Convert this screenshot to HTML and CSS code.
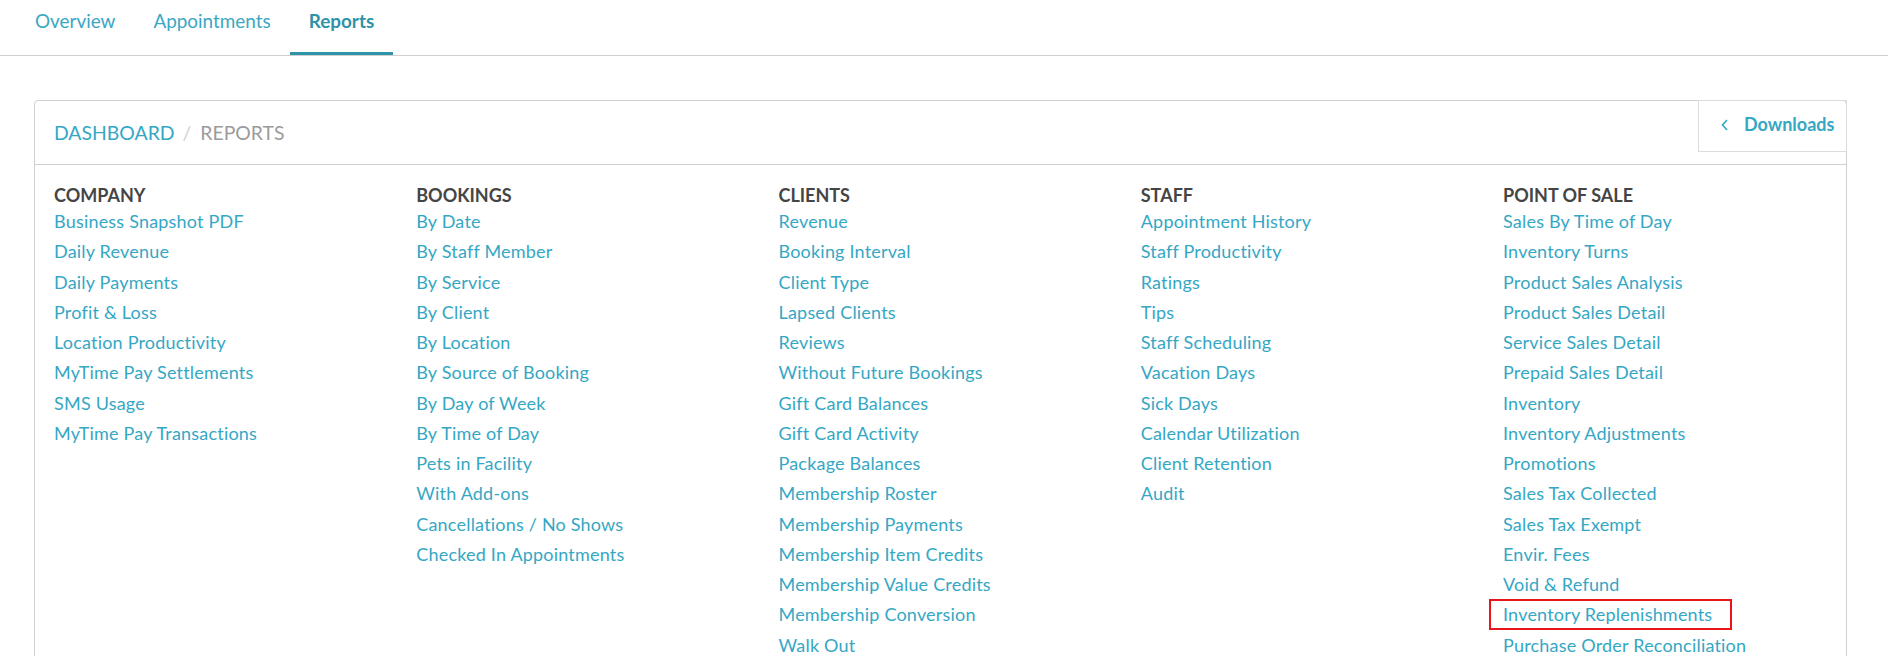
FILE: index.html
```html
<!DOCTYPE html>
<html>
<head>
<meta charset="utf-8">
<link rel="stylesheet" href="styles.css">
</head>
<body>
<nav class="tabs">
  <a class="tab">Overview</a>
  <a class="tab">Appointments</a>
  <a class="tab active">Reports</a>
</nav>
<main class="page">
  <section class="card">
    <header class="card-head">
      <div class="crumbs"><span class="crumb-link">DASHBOARD</span><span class="sep">/</span><span class="crumb-current">REPORTS</span></div>
      <a class="downloads"><svg class="chev" width="8" height="12" viewBox="0 0 8 12"><path d="M6 1 L1.5 6 L6 11" fill="none" stroke="#35a7c4" stroke-width="1.6"/></svg>Downloads</a>
    </header>
    <div class="card-body">
      <div class="col">
        <h3>COMPANY</h3>
        <a>Business Snapshot PDF</a>
        <a>Daily Revenue</a>
        <a>Daily Payments</a>
        <a>Profit &amp; Loss</a>
        <a>Location Productivity</a>
        <a>MyTime Pay Settlements</a>
        <a>SMS Usage</a>
        <a>MyTime Pay Transactions</a>
      </div>
      <div class="col">
        <h3>BOOKINGS</h3>
        <a>By Date</a>
        <a>By Staff Member</a>
        <a>By Service</a>
        <a>By Client</a>
        <a>By Location</a>
        <a>By Source of Booking</a>
        <a>By Day of Week</a>
        <a>By Time of Day</a>
        <a>Pets in Facility</a>
        <a>With Add-ons</a>
        <a>Cancellations / No Shows</a>
        <a>Checked In Appointments</a>
      </div>
      <div class="col">
        <h3>CLIENTS</h3>
        <a>Revenue</a>
        <a>Booking Interval</a>
        <a>Client Type</a>
        <a>Lapsed Clients</a>
        <a>Reviews</a>
        <a>Without Future Bookings</a>
        <a>Gift Card Balances</a>
        <a>Gift Card Activity</a>
        <a>Package Balances</a>
        <a>Membership Roster</a>
        <a>Membership Payments</a>
        <a>Membership Item Credits</a>
        <a>Membership Value Credits</a>
        <a>Membership Conversion</a>
        <a>Walk Out</a>
      </div>
      <div class="col">
        <h3>STAFF</h3>
        <a>Appointment History</a>
        <a>Staff Productivity</a>
        <a>Ratings</a>
        <a>Tips</a>
        <a>Staff Scheduling</a>
        <a>Vacation Days</a>
        <a>Sick Days</a>
        <a>Calendar Utilization</a>
        <a>Client Retention</a>
        <a>Audit</a>
      </div>
      <div class="col">
        <h3>POINT OF SALE</h3>
        <a>Sales By Time of Day</a>
        <a>Inventory Turns</a>
        <a>Product Sales Analysis</a>
        <a>Product Sales Detail</a>
        <a>Service Sales Detail</a>
        <a>Prepaid Sales Detail</a>
        <a>Inventory</a>
        <a>Inventory Adjustments</a>
        <a>Promotions</a>
        <a>Sales Tax Collected</a>
        <a>Sales Tax Exempt</a>
        <a>Envir. Fees</a>
        <a>Void &amp; Refund</a>
        <a><span class="highlight">Inventory Replenishments</span></a>
        <a>Purchase Order Reconciliation</a>
      </div>
    </div>
  </section>
</main>
</body>
</html>
```

FILE: styles.css
```css
html, body {
  margin: 0;
  padding: 0;
  background: #fff;
}
body {
  font-family: Lato, "Open Sans", sans-serif;
  color: #474747;
  overflow: hidden;
}
.tabs {
  display: flex;
  height: 55px;
  padding-left: 16px;
  border-bottom: 1px solid #cfcfcf;
}
.tab {
  display: block;
  box-sizing: border-box;
  height: 55px;
  padding: 9px 19px 0;
  font-size: 18.9px;
  line-height: 24px;
  color: #3aa8c3;
}
.tab.active {
  color: #2f93a8;
  font-weight: 700;
  border-bottom: 3px solid #2e95a8;
}
.page {
  padding: 44px 41px 0 34px;
}
.card {
  border: 1px solid #d0d0d0;
  border-radius: 4px;
  height: 700px;
}
.card-head {
  display: flex;
  justify-content: space-between;
  align-items: flex-start;
  height: 63px;
  border-bottom: 1px solid #d0d0d0;
}
.crumbs {
  align-self: center;
  padding-left: 19px;
  font-size: 19.4px;
  line-height: 26px;
}
.crumb-link { color: #35a7c4; }
.sep { color: #cfcfcf; margin: 0 9px 0 8px; }
.crumb-current { color: #9b9b9b; }
.downloads {
  display: flex;
  align-items: center;
  box-sizing: border-box;
  width: 149px;
  height: 52px;
  margin: -1px -1px 0 0;
  padding: 0 0 5px 22px;
  border: 1px solid #dcdcdc;
  font-size: 18px;
  font-weight: 700;
  color: #35a7c4;
}
.chev { margin-right: 15px; margin-top: 3px; }
.card-body {
  display: grid;
  grid-template-columns: repeat(5, 362.25px);
  padding: 20px 0 0 19px;
}
.col {
  display: flex;
  flex-direction: column;
  align-items: flex-start;
}
.col h3 {
  margin: 0;
  font-size: 18px;
  font-weight: 700;
  line-height: 21px;
  color: #454545;
}
.col a {
  font-size: 18px;
  line-height: 30.27px;
  letter-spacing: 0.2px;
  color: #35a7c4;
}
.highlight {
  position: relative;
  display: inline-block;
}
.highlight::after {
  content: "";
  position: absolute;
  left: -14px;
  right: -20px;
  top: 0;
  bottom: 0;
  border: 2px solid #e8151b;
}
```
